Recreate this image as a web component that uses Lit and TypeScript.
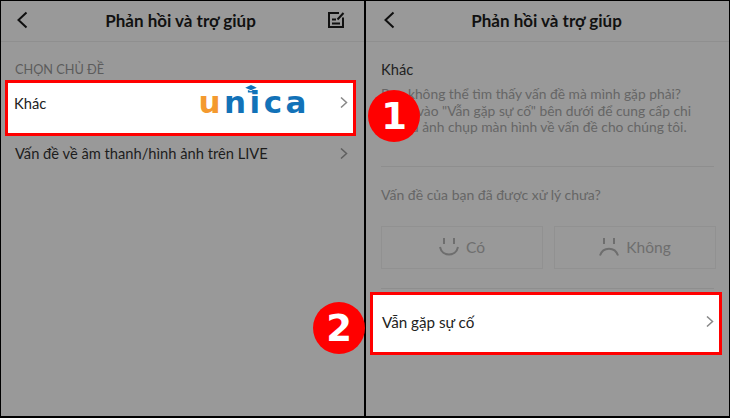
import { LitElement, html, css } from "lit";
import { customElement } from "lit/decorators.js";

const chevron = html`<svg class="chev" viewBox="0 0 8 11" width="8" height="11"><path d="M1 .5 6.500 5.500 1 10.500" fill="none" stroke="currentColor" stroke-width="1.500"/></svg>`;
const back = html`<svg class="back" viewBox="0 0 12 18" width="12" height="18"><path d="M10.500 1.500 2.500 9l8 7.500" fill="none" stroke="#0f0f0f" stroke-width="2"/></svg>`;

@customElement("app-root")
export class AppRoot extends LitElement {
  static styles = css`
    :host {
      display: block;
      width: 730px;
      height: 418px;
      font-family: "Lato", "Open Sans", sans-serif;
      color: #1a1a1a;
    }
    .frame {
      position: relative;
      box-sizing: border-box;
      width: 730px;
      height: 418px;
      display: grid;
      grid-template-columns: 363px 363px;
      column-gap: 2px;
      padding: 1px 1px 2px 1px;
      background: #000;
      overflow: hidden;
    }
    .panel { background: #999; display: flex; flex-direction: column; min-width: 0; }
    .hdr {
      height: 41px;
      flex: none;
      box-sizing: border-box;
      display: flex;
      align-items: center;
      justify-content: space-between;
      padding: 0 19px 2px 15px;
      border-bottom: 1px solid #8f8f8f;
    }
    .r .hdr { padding: 0 19px 2px 17px; }
    .title { font-size: 17px; font-weight: 700; color: #111; }
    .hdr .slot { width: 18px; display: flex; }
    .section { font-size: 12.7px; color: #5c5c5c; padding: 19px 14px 0; line-height: 16px; }
    .row { display: flex; align-items: center; justify-content: space-between; font-size: 14.7px; color: #1d1d1d; }
    .chev { color: #5f5f5f; flex: none; }
    .hl {
      box-sizing: border-box;
      background: #fff;
      border: 3px solid #f00;
      color: #222;
    }
    .hl .chev { color: #888; }
    .left-hl { height: 56px; margin: 3px 8px 0 4px; padding: 0 5px 11px 6px; }
    .logo {
      position: relative;
      font: 700 31px "DejaVu Sans", sans-serif;
      letter-spacing: 3.500px;
      color: #1272b8;
      margin-left: auto;
      margin-right: 30px;
      line-height: 36px;
      margin-top: -1px;
    }
    .logo span { color: #f49a2f; }
    .cap { position: absolute; left: 47px; top: 1px; width: 12px; height: 8px; }
    .plain { padding: 7px 16px 0 14px; height: 20px; line-height: 20px; }
    .body { padding: 0 15px; display: flex; flex-direction: column; }
    .topic { font-size: 14.7px; margin-top: 18px; line-height: 18px; color: #222; }
    .desc { font-size: 13.8px; line-height: 16.500px; color: #666; margin-top: 8px; padding-bottom: 30px; border-bottom: 1px solid #8e8e8e; white-space: nowrap; }
    .q { font-size: 14px; color: #666; margin-top: 19px; line-height: 18px; }
    .btns { display: grid; grid-template-columns: 162px 162px; gap: 11px; margin-top: 22px; }
    .btn {
      box-sizing: border-box;
      height: 43px;
      border: 1px solid #919191;
      display: flex;
      align-items: center;
      justify-content: center;
      gap: 7px;
      font-size: 15.500px;
      color: #6e6e6e;
    }
    .rule { border-top: 1px solid #8e8e8e; margin-top: 19px; }
    .right-hl { height: 63px; margin: 3px 7px 0 4px; padding: 0 5px 3px 9px; font-size: 15.200px; }
    .badge {
      position: absolute;
      width: 52px;
      height: 52px;
      border-radius: 50%;
      background: #f00;
      color: #fff;
      display: flex;
      align-items: center;
      justify-content: center;
      font: 700 37px "DejaVu Sans", sans-serif;
    }
    .b1 { left: 368px; top: 90px; }
    .b2 { left: 313px; top: 302px; }
  `;

  render() {
    return html`<div class="frame">
      <section class="panel">
        <div class="hdr">
          <span class="slot">${back}</span>
          <span class="title">Phản hồi và trợ giúp</span>
          <span class="slot">
            <svg viewBox="0 0 18 18" width="18" height="18" fill="none" stroke="#111" stroke-width="2">
              <path d="M12 2H2v14h14V6.500M5 8.500h4M5 12.500h8M10.500 8.500l6-6.500"/>
            </svg>
          </span>
        </div>
        <div class="section">CHỌN CHỦ ĐỀ</div>
        <div class="row hl left-hl">
          <span>Khác</span>
          <span class="logo"><span>u</span>nica
            <svg class="cap" viewBox="0 0 13 9"><path d="M6.500 0 13 3 6.500 6 0 3z M3 5.500 6.500 7 10 5.500V8.500H3z" fill="#1272b8"/></svg>
          </span>
          ${chevron}
        </div>
        <div class="row plain"><span>Vấn đề về âm thanh/hình ảnh trên LIVE</span>${chevron}</div>
      </section>
      <section class="panel r">
        <div class="hdr">
          <span class="slot">${back}</span>
          <span class="title">Phản hồi và trợ giúp</span>
          <span class="slot"></span>
        </div>
        <div class="body">
          <div class="topic">Khác</div>
          <div class="desc">Bạn không thể tìm thấy vấn đề mà mình gặp phải?<br />Nhấn vào "Vẫn gặp sự cố" bên dưới để cung cấp chi<br />tiết và ảnh chụp màn hình về vấn đề cho chúng tôi.</div>
          <div class="q">Vấn đề của bạn đã được xử lý chưa?</div>
          <div class="btns">
            <div class="btn">
              <svg viewBox="0 0 20 18" width="20" height="18" fill="none" stroke="#6e6e6e" stroke-width="2"><path d="M5 0v6M15 0v6M1 9c2 10 16 10 18 0"/></svg>
              Có
            </div>
            <div class="btn">
              <svg viewBox="0 0 20 18" width="20" height="18" fill="none" stroke="#6e6e6e" stroke-width="2"><path d="M5 0v6M15 0v6M1 17.500c3-9 15-9 18 0"/></svg>
              Không
            </div>
          </div>
          <div class="rule"></div>
        </div>
        <div class="row hl right-hl"><span>Vẫn gặp sự cố</span>${chevron}</div>
      </section>
      <div class="badge b1">1</div>
      <div class="badge b2">2</div>
    </div>`;
  }
}
